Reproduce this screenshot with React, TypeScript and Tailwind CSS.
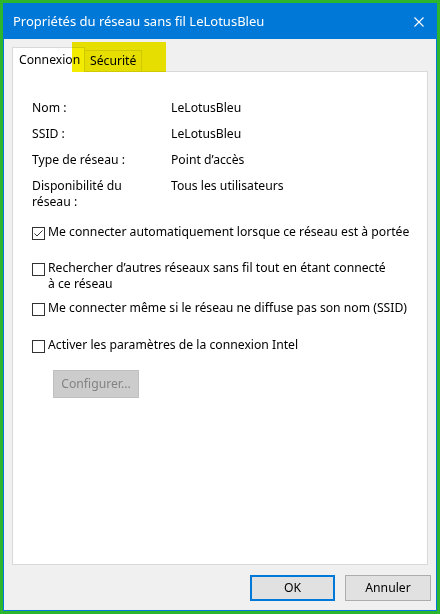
import React from 'react';

const font = { fontFamily: '"Noto Sans", "Open Sans", sans-serif' };

interface CheckRowProps {
  checked?: boolean;
  children: React.ReactNode;
  className?: string;
}

const CheckRow: React.FC<CheckRowProps> = ({ checked, children, className }) => (
  <div className={`flex items-start ${className ?? ''}`}>
    <span className="mt-[3px] flex h-[13px] w-[13px] shrink-0 items-center justify-center border border-[#333333] bg-white">
      {checked && (
        <svg width="11" height="11" viewBox="0 0 11 11">
          <path d="M1.5 5.5 L4 8 L9.5 2.5" fill="none" stroke="#333333" strokeWidth="1" />
        </svg>
      )}
    </span>
    <span className="ml-[3px] leading-[16px]">{children}</span>
  </div>
);

const InfoRow: React.FC<{ label: React.ReactNode; value: string }> = ({ label, value }) => (
  <div className="flex leading-[16px]">
    <div className="w-[139px] shrink-0">{label}</div>
    <div>{value}</div>
  </div>
);

export default function App() {
  return (
    <div className="h-[614px] w-[440px] border-[3px] border-[#2db52d] text-[12.2px] text-black" style={font}>
      <div className="flex h-full flex-col border border-[#0078d7] bg-[#f0f0f0]">
        <div className="flex h-[35px] shrink-0 items-center justify-between bg-[#0078d7] pl-[9px] pr-[12px] text-[13px] text-white">
          <span>Propriétés du réseau sans fil LeLotusBleu</span>
          <svg width="10" height="10" viewBox="0 0 10 10">
            <path d="M0.5 0.5 L9.5 9.5 M9.5 0.5 L0.5 9.5" stroke="white" strokeWidth="1.1" />
          </svg>
        </div>

        <div className="relative mx-[8px] mt-[8px] flex h-[24px] items-end">
          <div className="z-10 -mb-px flex h-[25px] w-[73px] items-center border border-b-0 border-[#d9d9d9] bg-white pl-[6px]">
            Connexion
          </div>
          <div className="flex h-[21px] w-[57px] items-center border border-b-0 border-l-0 border-[#d9d9d9] bg-[#f0f0f0] pl-[5px]">
            Sécurité
          </div>
          <div className="pointer-events-none absolute left-[60px] top-[-5px] z-20 h-[30px] w-[94px] bg-[#f4ec00] mix-blend-multiply" />
        </div>

        <div className="mx-[8px] flex h-[494px] flex-col border border-[#d9d9d9] bg-white pl-[19px] pt-[28px]">
          <div className="flex flex-col gap-[10px]">
            <InfoRow label="Nom :" value="LeLotusBleu" />
            <InfoRow label="SSID :" value="LeLotusBleu" />
            <InfoRow label="Type de réseau :" value="Point d’accès" />
            <InfoRow
              label={
                <>
                  Disponibilité du
                  <br />
                  réseau :
                </>
              }
              value="Tous les utilisateurs"
            />
          </div>

          <CheckRow checked className="mt-[14px]">
            Me connecter automatiquement lorsque ce réseau est à portée
          </CheckRow>
          <CheckRow className="mt-[20px]">
            Rechercher d’autres réseaux sans fil tout en étant connecté
            <br />à ce réseau
          </CheckRow>
          <CheckRow className="mt-[8px]">Me connecter même si le réseau ne diffuse pas son nom (SSID)</CheckRow>
          <CheckRow className="mt-[21px]">Activer les paramètres de la connexion Intel</CheckRow>

          <button
            type="button"
            disabled
            className="ml-[21px] mt-[17px] h-[28px] w-[86px] border border-[#bfbfbf] bg-[#cccccc] text-[12.2px] text-[#838383]"
          >
            Configurer...
          </button>
        </div>

        <div className="mt-[10px] flex justify-end gap-[10px] pr-[5px]">
          <button type="button" className="h-[26px] w-[85px] border-2 border-[#0078d7] bg-[#e1e1e1] text-[12.2px]">
            OK
          </button>
          <button type="button" className="h-[26px] w-[86px] border border-[#adadad] bg-[#e1e1e1] text-[12.2px]">
            Annuler
          </button>
        </div>
      </div>
    </div>
  );
}
